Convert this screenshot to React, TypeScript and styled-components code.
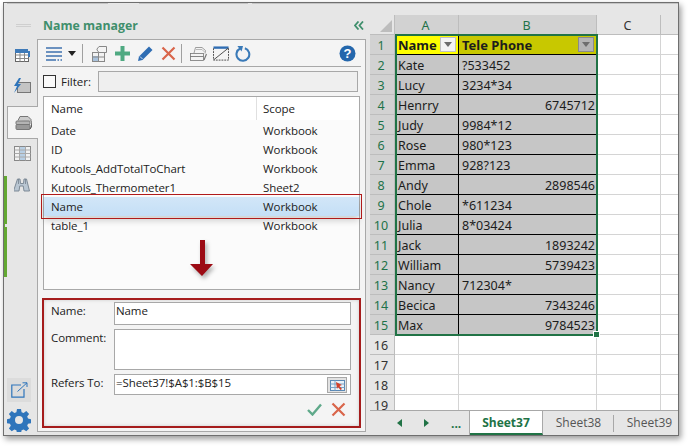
import React from 'react';
import styled, { createGlobalStyle } from 'styled-components';

const GlobalStyle = createGlobalStyle`
  html, body { margin: 0; padding: 0; background: #ffffff; }
  body { width: 689px; height: 447px; overflow: hidden; font-family: "Open Sans", "Noto Sans", sans-serif; }
`;

const Page = styled.div`
  width: 689px;
  height: 447px;
  padding: 2px 10px 0 3px;
  box-sizing: border-box;
`;

const Window = styled.div`
  position: relative;
  display: flex;
  width: 676px;
  height: 434px;
  box-sizing: border-box;
  background: #e6e6e6;
  border: 1px solid #6f6f6f;
  box-shadow: 2px 3px 6px rgba(0, 0, 0, 0.4);

  /* faint ribbon edge left over along the top of the capture */
  &::before {
    content: '';
    position: absolute;
    left: 3px;
    right: 0;
    top: 0;
    height: 1px;
    background: linear-gradient(
      to right,
      #c4c4c4 0 101px,
      transparent 101px 132px,
      #c4c4c4 132px 241px,
      transparent 241px 245px,
      #c4c4c4 245px
    );
  }
`;

/* left icon rail */
const Rail = styled.div`
  position: relative;
  display: flex;
  flex-direction: column;
  align-items: stretch;
  width: 33px;
  flex: none;
  padding: 21px 0 0 3px;
  box-sizing: border-box;
`;

const Grip = styled.div`
  width: 15px;
  height: 3px;
  margin: 0 0 13px 9px;
  border-top: 1px solid #cfcfcf;
  border-bottom: 1px solid #cfcfcf;
  box-sizing: border-box;
`;

const RailTab = styled.div<{ $active?: boolean }>`
  display: flex;
  align-items: center;
  justify-content: center;
  height: ${p => (p.$active ? 33 : 31)}px;
  margin: ${p => (p.$active ? '4px -1px -1px 0' : '0')};
  box-sizing: border-box;
  position: relative;
  z-index: 2;
  ${p => p.$active && `
    background: #f4f4f4;
    border: 1px solid #a8a8a8;
    border-right: none;
  `}
`;

const GreenBar = styled.div`
  position: absolute;
  left: 0;
  top: 173px;
  width: 3px;
  height: 101px;
  background: #63a832;
`;

const BarNotch = styled.span`
  position: absolute;
  left: 1px;
  top: 48px;
  width: 2px;
  height: 3px;
  background: #e6e6e6;
`;

const RailBottom = styled.div`
  margin-top: auto;
  display: flex;
  flex-direction: column;
  align-items: center;
  padding: 0 6px 3px 0;
  gap: 6px;
`;

const ExportBox = styled.div`
  display: flex;
  align-items: center;
  justify-content: center;
  width: 24px;
  height: 24px;
  background: #dcdcdc;
`;

/* name manager panel */
const Panel = styled.div`
  display: flex;
  flex-direction: column;
  width: 329px;
  flex: none;
`;

const PanelHead = styled.div`
  display: flex;
  align-items: center;
  justify-content: space-between;
  height: 36px;
  padding: 8px 2px 0 6px;
  box-sizing: border-box;
`;

const PanelTitle = styled.div`
  font-size: 12.3px;
  font-weight: 700;
  color: #3f8f6c;
`;

const Chevrons = styled.div`
  display: flex;
`;

const PanelBody = styled.div`
  flex: 1;
  margin-bottom: 3px;
  padding: 0 5px;
  background: #f4f4f4;
  border: 1px solid #a8a8a8;
  display: flex;
  flex-direction: column;
`;

const Toolbar = styled.div`
  display: flex;
  align-items: center;
  height: 27px;
  margin: 0 -1px;
  padding: 1px 5px 0 3px;
  border-bottom: 1px solid #a8a8a8;
  box-sizing: border-box;
  flex: none;
`;

const ToolIcon = styled.span<{ $gap?: number; $end?: boolean }>`
  display: flex;
  align-items: center;
  margin-left: ${p => (p.$end ? 'auto' : `${p.$gap ?? 0}px`)};
`;

const ToolSep = styled.span<{ $gap: number }>`
  width: 1px;
  height: 19px;
  background: #a0a0a0;
  margin-left: ${p => p.$gap}px;
`;

const FilterRow = styled.div`
  display: flex;
  align-items: center;
  height: 29px;
  flex: none;
  font-size: 11.5px;
  color: #222;
`;

const CheckBox = styled.span`
  width: 13px;
  height: 13px;
  box-sizing: border-box;
  border: 1px solid #333;
  background: #fafafa;
  margin-right: 5px;
`;

const FilterInput = styled.div`
  width: 260px;
  height: 21px;
  margin-left: 7px;
  box-sizing: border-box;
  background: #efefef;
  border: 1px solid #a8a8a8;
`;

const NameList = styled.div`
  position: relative;
  height: 194px;
  flex: none;
  border: 1px solid #a8a8a8;
  box-sizing: border-box;
  background: #fbfbfb;
`;

const ListRow = styled.div<{ $head?: boolean; $selected?: boolean }>`
  display: grid;
  grid-template-columns: 212px 1fr;
  align-items: center;
  height: ${p => (p.$head ? 23 : 19)}px;
  margin-bottom: ${p => (p.$head ? 1 : 0)}px;
  padding-left: 7px;
  font-size: 11.5px;
  color: #222;
  letter-spacing: -0.08px;
  ${p => p.$head && 'background: #ffffff;'}
  ${p => p.$selected && `
    position: relative;
    background: linear-gradient(#d2e6f8, #c4dff6);
    outline: 1px solid #b01a1a;
    outline-offset: 2px;
    box-shadow: 0 5px 6px rgba(0, 0, 0, 0.16);
  `}
`;

const ScopeHead = styled.span`
  border-left: 1px solid #e0e0e0;
  padding-left: 6px;
  margin-left: -7px;
  line-height: 23px;
`;

const ArrowDown = styled.svg`
  position: absolute;
  left: 143px;
  top: 142px;
  filter: drop-shadow(2px 3px 2px rgba(0, 0, 0, 0.3));
`;

const EditBox = styled.div`
  display: grid;
  grid-template-columns: 63px 237px;
  grid-template-rows: 23px 41px 21px 1fr;
  row-gap: 4px;
  height: 130px;
  margin: 8px -1px 0;
  padding: 3px 0 0 8px;
  box-sizing: border-box;
  border: 1px solid #a51c1c;
  outline: 1px solid #a51c1c;
  outline-offset: -2px;
  box-shadow: inset 0 0 4px rgba(0, 0, 0, 0.25);
  font-size: 11.5px;
  color: #222;
  letter-spacing: -0.1px;
`;

const FieldLabel = styled.div`
  padding-top: 1px;
  line-height: 16px;
`;

const FieldInput = styled.div`
  position: relative;
  box-sizing: border-box;
  background: #ffffff;
  border: 1px solid #a8a8a8;
  padding-left: 1px;
  line-height: 16px;
`;

const PickButton = styled.span`
  position: absolute;
  right: 3px;
  top: 2px;
  display: flex;
  align-items: center;
  justify-content: center;
  width: 20px;
  height: 16px;
  background: #e2e2e2;
  border: 1px solid #a8a8a8;
  box-sizing: border-box;
`;

const FormActions = styled.div`
  grid-column: 2;
  display: flex;
  justify-content: flex-end;
  align-items: center;
  gap: 9px;
  padding: 0 5px 7px 0;
`;

/* worksheet */
const Sheet = styled.div`
  display: flex;
  flex-direction: column;
  margin: 12px 0 0 4px;
  flex: 1;
  min-width: 0;
  background: #ffffff;
`;

const GridWrap = styled.div`
  position: relative;
  height: 395px;
  overflow: hidden;
  flex: none;
`;

const CellGrid = styled.div`
  display: grid;
  grid-template-columns: 25px 64px 138px 64px 19px;
  grid-template-rows: 20px;
  grid-auto-rows: 20px;
  font-family: "Noto Sans", sans-serif;
  font-size: 12.5px;
  color: #1c1c1c;
`;

const HeadCell = styled.div<{ $on?: boolean }>`
  position: relative;
  display: flex;
  align-items: center;
  justify-content: center;
  box-sizing: border-box;
  padding: 1px 2px 0 0;
  background: ${p => (p.$on ? '#d2d2d2' : '#e6e6e6')};
  color: ${p => (p.$on ? '#1f7249' : '#333')};
  border-right: 1px solid #bdbdbd;
  border-bottom: 1px solid #bdbdbd;
`;

const Corner = styled.svg`
  position: absolute;
  right: 2px;
  bottom: 2px;
`;

const Cell = styled.div<{ $bg?: string; $right?: boolean; $bold?: boolean; $data?: boolean }>`
  position: relative;
  display: flex;
  align-items: center;
  justify-content: ${p => (p.$right ? 'flex-end' : 'flex-start')};
  box-sizing: border-box;
  padding: 1px 1px 0 3px;
  white-space: nowrap;
  font-weight: ${p => (p.$bold ? 700 : 400)};
  font-size: ${p => (p.$bold ? 13 : 12.5)}px;
  background: ${p => p.$bg ?? '#ffffff'};
  border-right: 1px solid ${p => (p.$data ? '#000000' : '#d4d4d4')};
  border-bottom: 1px solid ${p => (p.$data ? '#000000' : '#d4d4d4')};
`;

const FilterBtn = styled.span<{ $dark?: boolean }>`
  position: absolute;
  right: 2px;
  top: 2px;
  width: 16px;
  height: 15px;
  box-sizing: border-box;
  display: flex;
  align-items: center;
  justify-content: center;
  background: ${p => (p.$dark ? '#b4b4b4' : '#f4f4f4')};
  border: 1px solid ${p => (p.$dark ? '#8a8a8a' : '#c0c0c0')};
`;

const Selection = styled.div`
  position: absolute;
  left: 25px;
  top: 19px;
  width: 203px;
  height: 302px;
  box-sizing: border-box;
  border: 2px solid #217346;
  pointer-events: none;
`;

const FillHandle = styled.span`
  position: absolute;
  right: -4px;
  bottom: -4px;
  width: 5px;
  height: 5px;
  background: #217346;
  border: 1px solid #ffffff;
`;

const TabBar = styled.div`
  display: flex;
  align-items: stretch;
  flex: 1;
  background: #e6e6e6;
  border-top: 1px solid #a8a8a8;
  font-size: 12px;
  overflow: hidden;
`;

const TabNav = styled.div`
  display: flex;
  align-items: center;
  width: 100px;
  flex: none;
  padding-left: 27px;
  box-sizing: border-box;
  gap: 22px;
  border-right: 1px solid #a8a8a8;
  color: #217346;
  font-weight: 700;
`;

const SheetTab = styled.div<{ $active?: boolean; $sep?: boolean }>`
  display: flex;
  align-items: center;
  justify-content: center;
  flex: none;
  height: 100%;
  width: ${p => (p.$active ? 73 : 71)}px;
  box-sizing: border-box;
  padding-bottom: ${p => (p.$active ? 0 : 2)}px;
  font-weight: ${p => (p.$active ? 700 : 400)};
  color: ${p => (p.$active ? '#217346' : '#555')};
  background: ${p => (p.$active ? '#ffffff' : 'transparent')};
  border-bottom: ${p => (p.$active ? '2px solid #217346' : 'none')};
  border-right: ${p => (p.$active ? '1px solid #a8a8a8' : 'none')};
  position: relative;
  ${p => p.$sep && `
    &::after {
      content: '';
      position: absolute;
      right: 0;
      top: 4px;
      bottom: 3px;
      width: 1px;
      background: #a8a8a8;
    }
  `}
`;

const names: [string, string][] = [
  ['Date', 'Workbook'],
  ['ID', 'Workbook'],
  ['Kutools_AddTotalToChart', 'Workbook'],
  ['Kutools_Thermometer1', 'Sheet2'],
  ['Name', 'Workbook'],
  ['table_1', 'Workbook'],
];

const rows: [string, string, boolean][] = [
  ['Kate', '?533452', false],
  ['Lucy', '3234*34', false],
  ['Henrry', '6745712', true],
  ['Judy', '9984*12', false],
  ['Rose', '980*123', false],
  ['Emma', '928?123', false],
  ['Andy', '2898546', true],
  ['Chole', '*611234', false],
  ['Julia', '8*03424', false],
  ['Jack', '1893242', true],
  ['William', '5739423', true],
  ['Nancy', '712304*', false],
  ['Becica', '7343246', true],
  ['Max', '9784523', true],
];

const Caret = ({ color = '#555' }: { color?: string }) => (
  <svg width="8" height="5" viewBox="0 0 8 5"><path d="M0 0h8L4 5z" fill={color} /></svg>
);

const CrossIcon = () => (
  <svg width="15" height="15" viewBox="0 0 15 15">
    <path d="M1.5 1.5l12 12M13.5 1.5l-12 12" stroke="#d9654a" strokeWidth="2.2" fill="none" />
  </svg>
);

export default function App() {
  return (
    <Page>
      <GlobalStyle />
      <Window>
        <Rail>
          <GreenBar>
            <BarNotch />
          </GreenBar>
          <Grip />
          <RailTab>
            <svg width="17" height="15" viewBox="0 0 17 15">
              <rect x="1.5" y="3.5" width="13" height="10" fill="#fff" stroke="#666" />
              <path d="M1.5 7h13M1.5 10.500h13M6 3.500v10M10.500 3.500v10" stroke="#888" fill="none" />
              <rect x="1" y="1" width="13" height="4" fill="#3f7ab8" />
              <path d="M15 3v6" stroke="#3f7ab8" strokeWidth="2" />
            </svg>
          </RailTab>
          <RailTab>
            <svg width="18" height="17" viewBox="0 0 18 17">
              <rect x="4.500" y="4.500" width="13" height="10" fill="#c4c4c4" stroke="#777" />
              <path d="M6 0L1 8h3l-3 7 7-9H5l3-6z" fill="#2f75bb" />
            </svg>
          </RailTab>
          <RailTab $active>
            <svg width="17" height="16" viewBox="0 0 17 16">
              <path d="M3 5.500L5 1.500h8l3 3v2" fill="#ccc" stroke="#777" />
              <rect x="1" y="6" width="14" height="3.500" fill="#b4b4b4" stroke="#777" rx="1" />
              <rect x="1" y="9.500" width="14" height="5" fill="#999" stroke="#777" rx="1" />
              <path d="M15 14l2-3V6" fill="#777" stroke="#555" />
            </svg>
          </RailTab>
          <RailTab>
            <svg width="17" height="15" viewBox="0 0 17 15">
              <rect x="0.500" y="0.500" width="16" height="14" fill="#f2f2f2" stroke="#888" />
              <rect x="6" y="1" width="5" height="13" fill="#b8cfe4" />
              <path d="M0.500 4h16M0.500 7.500h16M0.500 11h16M5.500 0.500v14M11.500 0.500v14" stroke="#aaa" fill="none" />
            </svg>
          </RailTab>
          <RailTab>
            <svg width="16" height="14" viewBox="0 0 16 14">
              <path d="M3.500 1h2.500l.5 4.500h3l.5-4.500h2.500l3 12h-5.500l-.8-5h-3.400l-.8 5h-5.500z" fill="#b9c6d2" stroke="#75828e" strokeWidth="0.900" />
              <path d="M4.500 1v5M11.500 1v5" stroke="#75828e" strokeWidth="0.800" />
            </svg>
          </RailTab>
          <RailBottom>
            <ExportBox>
              <svg width="17" height="16" viewBox="0 0 17 16">
                <path d="M10 3H0.800v12.200H13V7" fill="none" stroke="#2f75bb" strokeWidth="1.200" />
                <path d="M6.500 9.500L16 0.800M11.500 0.800H16V5" fill="none" stroke="#2f75bb" strokeWidth="1" />
              </svg>
            </ExportBox>
            <svg width="24" height="24" viewBox="0 0 24 24">
              <path
                fillRule="evenodd"
                fill="#2f75bb"
                d="M10 1h4l.6 3.200 2 .8 2.700-1.900 2.800 2.800-1.900 2.700.8 2 3 .6v4l-3 .6-.8 2 1.900 2.700-2.800 2.800-2.700-1.900-2 .8-.6 3.200h-4l-.6-3.200-2-.8-2.700 1.900-2.800-2.800 1.900-2.700-.8-2-3-.6v-4l3-.6.8-2-1.900-2.700 2.800-2.800 2.700 1.900 2-.8zM12 8a4 4 0 100 8 4 4 0 000-8z"
              />
            </svg>
          </RailBottom>
        </Rail>

        <Panel>
          <PanelHead>
            <PanelTitle>Name manager</PanelTitle>
            <Chevrons>
              <svg width="10" height="9" viewBox="0 0 10 9">
                <path d="M4.500 .5L1 4.500l3.500 4M9 .5L5.500 4.500 9 8.500" fill="none" stroke="#3f8f6c" strokeWidth="1.800" />
              </svg>
            </Chevrons>
          </PanelHead>
          <PanelBody>
            <Toolbar>
              <ToolIcon $gap={1}>
                <svg width="16" height="14" viewBox="0 0 16 14">
                  <path d="M0 1h16M0 5h16M0 9h16M0 13h10M11.500 13h1.500M14.500 13h1.500" stroke="#3f72ae" strokeWidth="1.500" fill="none" />
                </svg>
              </ToolIcon>
              <ToolIcon $gap={6}><Caret color="#222" /></ToolIcon>
              <ToolSep $gap={6} />
              <ToolIcon $gap={9}>
                <svg width="15" height="16" viewBox="0 0 15 16">
                  <rect x="0.500" y="6.500" width="12" height="9" fill="#f2f2f2" stroke="#888" />
                  <rect x="1" y="10" width="5.500" height="5" fill="#a9c2dc" />
                  <path d="M0.500 11h12M6.500 6.500v9" stroke="#888" />
                  <path d="M5 3l2-2.500h7.500v6H7L5 4z" fill="#f4f4f4" stroke="#888" />
                </svg>
              </ToolIcon>
              <ToolIcon $gap={8}>
                <svg width="15" height="15" viewBox="0 0 15 15"><path d="M5.500 0h4v5.500H15v4H9.500V15h-4V9.500H0v-4h5.500z" fill="#4fa981" /></svg>
              </ToolIcon>
              <ToolIcon $gap={7}>
                <svg width="17" height="17" viewBox="0 0 17 17">
                  <path d="M1 16l1-4.500L12 1.500l3.500 3.500L5.500 15z" fill="#2f6db3" />
                  <path d="M3 11.500l2.500 2.500" stroke="#cfe0f2" />
                </svg>
              </ToolIcon>
              <ToolIcon $gap={7}><CrossIcon /></ToolIcon>
              <ToolSep $gap={5} />
              <ToolIcon $gap={8}>
                <svg width="17" height="15" viewBox="0 0 17 15">
                  <path d="M4 7l1.500-5.500H12l3.500 3-.5 3" fill="#f4f4f4" stroke="#888" strokeWidth="0.800" />
                  <path d="M6 3.500h6l2.500 2.500" fill="none" stroke="#aaa" strokeWidth="0.800" />
                  <rect x="0.500" y="7.500" width="13" height="3" fill="#f4f4f4" stroke="#777" strokeWidth="0.800" />
                  <rect x="0.500" y="10.500" width="13" height="4" fill="#f4f4f4" stroke="#777" strokeWidth="0.800" />
                  <path d="M14 14l2.500-6" stroke="#777" strokeWidth="1.200" />
                </svg>
              </ToolIcon>
              <ToolIcon $gap={6}>
                <svg width="16" height="15" viewBox="0 0 17 15">
                  <rect x="0.500" y="0" width="16" height="2.500" fill="#2f6db3" />
                  <path d="M0.500 2v12.500h16V2" fill="none" stroke="#444" strokeDasharray="2 1" />
                  <path d="M1 14L16 2" stroke="#444" fill="none" />
                </svg>
              </ToolIcon>
              <ToolIcon $gap={6}>
                <svg width="16" height="17" viewBox="0 0 17 17">
                  <path d="M5.500 3.200a6.800 6.800 0 1 0 5-.3" fill="none" stroke="#3a7ab8" strokeWidth="2.200" />
                  <path d="M2.500 0.500L8.500 0.500 7 6.500z" fill="#3a7ab8" />
                </svg>
              </ToolIcon>
              <ToolIcon $end>
                <svg width="17" height="17" viewBox="0 0 17 17">
                  <circle cx="8.500" cy="8.500" r="8" fill="#2467ac" />
                  <text x="8.500" y="13.200" textAnchor="middle" fontSize="13" fontWeight="700" fontFamily="'Liberation Sans', sans-serif" fill="#ffffff">?</text>
                </svg>
              </ToolIcon>
            </Toolbar>
            <FilterRow>
              <CheckBox />
              Filter:
              <FilterInput />
            </FilterRow>
            <NameList>
              <ListRow $head>
                <span>Name</span>
                <ScopeHead>Scope</ScopeHead>
              </ListRow>
              {names.map(([n, s]) => (
                <ListRow key={n} $selected={n === 'Name'}>
                  <span>{n}</span>
                  <span>{s}</span>
                </ListRow>
              ))}
              <ArrowDown width="30" height="42" viewBox="0 0 30 42">
                <path d="M13 1h5v24h8L15 37 3 25h10z" fill="#9c0b14" />
              </ArrowDown>
            </NameList>
            <EditBox>
              <FieldLabel>Name:</FieldLabel>
              <FieldInput>Name</FieldInput>
              <FieldLabel>Comment:</FieldLabel>
              <FieldInput />
              <FieldLabel>Refers To:</FieldLabel>
              <FieldInput>
                =Sheet37!$A$1:$B$15
                <PickButton>
                  <svg width="15" height="11" viewBox="0 0 15 11">
                    <rect x="0.500" y="0.500" width="14" height="10" fill="#e9f1f8" stroke="#5b89b5" />
                    <path d="M0.500 4h14M0.500 7.500h14M5 .5v10" stroke="#7ba3c7" />
                    <path d="M6 2l6 3-2.500 1L12 9l-1.500 1L8 7l-1 2z" fill="#d2402a" />
                  </svg>
                </PickButton>
              </FieldInput>
              <FormActions>
                <svg width="15" height="13" viewBox="0 0 15 13">
                  <path d="M1 7l4.500 4.500L14 1.500" fill="none" stroke="#5fa98a" strokeWidth="2.400" />
                </svg>
                <CrossIcon />
              </FormActions>
            </EditBox>
          </PanelBody>
        </Panel>

        <Sheet>
          <GridWrap>
            <CellGrid>
              <HeadCell>
                <Corner width="12" height="12" viewBox="0 0 12 12"><path d="M12 0v12H0z" fill="#bdbdbd" /></Corner>
              </HeadCell>
              <HeadCell $on>A</HeadCell>
              <HeadCell $on>B</HeadCell>
              <HeadCell>C</HeadCell>
              <HeadCell />

              <HeadCell $on>1</HeadCell>
              <Cell $data $bold $bg="#ffff00">
                Name
                <FilterBtn><Caret color="#6d6d6d" /></FilterBtn>
              </Cell>
              <Cell $data $bold $bg="#c8c800">
                Tele Phone
                <FilterBtn $dark><Caret color="#6d6d6d" /></FilterBtn>
              </Cell>
              <Cell />
              <Cell />

              {rows.map(([name, phone, right], i) => (
                <React.Fragment key={name}>
                  <HeadCell $on>{i + 2}</HeadCell>
                  <Cell $data $bg="#c6c6c6">{name}</Cell>
                  <Cell $data $bg="#c6c6c6" $right={right}>{phone}</Cell>
                  <Cell />
                  <Cell />
                </React.Fragment>
              ))}

              {[16, 17, 18, 19].map(n => (
                <React.Fragment key={n}>
                  <HeadCell>{n}</HeadCell>
                  <Cell />
                  <Cell />
                  <Cell />
                  <Cell />
                </React.Fragment>
              ))}
            </CellGrid>
            <Selection>
              <FillHandle />
            </Selection>
          </GridWrap>
          <TabBar>
            <TabNav>
              <svg width="5" height="8" viewBox="0 0 5 8"><path d="M5 0v8L0 4z" fill="#217346" /></svg>
              <svg width="5" height="8" viewBox="0 0 5 8"><path d="M0 0v8l5-4z" fill="#217346" /></svg>
              <span>...</span>
            </TabNav>
            <SheetTab $active>Sheet37</SheetTab>
            <SheetTab $sep>Sheet38</SheetTab>
            <SheetTab>Sheet39</SheetTab>
          </TabBar>
        </Sheet>
      </Window>
    </Page>
  );
}
